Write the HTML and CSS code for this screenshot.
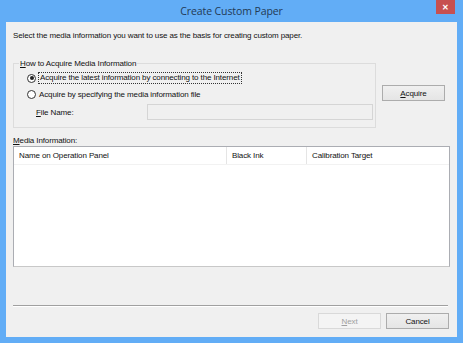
FILE: index.html
```html
<!DOCTYPE html>
<html lang="en">
	<head>
		<title>Create Custom Paper</title>
		<link rel="stylesheet" href="styles.css">
	</head>
	<body>
		<div class="window">
			<div class="titlebar">
				<span class="title">Create Custom Paper</span>
				<span class="close">&#x2715;</span>
			</div>
			<div class="client">
				<p class="intro">Select the media information you want to use as the basis for creating custom paper.</p>

				<div class="acquire-row">
					<div class="group">
						<span class="legend"><u>H</u>ow to Acquire Media Information</span>
						<label class="radio">
							<span class="dot checked"></span>
							<span class="focus">Acquire the latest information by connecting to the Internet</span>
						</label>
						<label class="radio">
							<span class="dot"></span>
							<span>Acquire by specifying the media information file</span>
						</label>
						<div class="file-row">
							<span class="file-label"><u>F</u>ile Name:</span>
							<span class="input"></span>
						</div>
					</div>
					<button class="btn btn-acquire"><u>A</u>cquire</button>
				</div>

				<p class="list-label"><u>M</u>edia Information:</p>
				<div class="list">
					<div class="list-head">
						<span class="col col-name">Name on Operation Panel</span>
						<span class="col col-ink">Black Ink</span>
						<span class="col col-target">Calibration Target</span>
					</div>
				</div>

				<div class="separator"></div>

				<div class="buttons">
					<button class="btn" disabled><u>N</u>ext</button>
					<button class="btn">Cancel</button>
				</div>
			</div>
		</div>
	</body>
</html>
```

FILE: styles.css
```css
*, *:after, *:before { box-sizing: border-box; }

html, body {
	margin: 0;
	padding: 0;
}

body {
	width: 463px;
	height: 343px;
	overflow: hidden;
	font-family: 'Liberation Sans', Arial, sans-serif;
	font-size: 8px;
	letter-spacing: -0.12px;
	color: #111;
}

u { text-decoration: underline; }

/*************************************
Window frame
**************************************/

.window {
	width: 463px;
	height: 343px;
	background: #62adf6;
	padding: 0 6px 6px 6px;
	display: flex;
	flex-direction: column;
}

.titlebar {
	position: relative;
	height: 22px;
	display: flex;
	align-items: center;
	justify-content: center;
}

.title {
	font-family: 'Open Sans', sans-serif;
	font-size: 10.5px;
	letter-spacing: -0.1px;
	color: #233a55;
}

.close {
	position: absolute;
	top: 0;
	right: 2px;
	width: 19px;
	height: 14px;
	background: #c75050;
	color: #fff;
	font-size: 8px;
	font-weight: bold;
	display: flex;
	align-items: center;
	justify-content: center;
}

.client {
	flex: 1;
	background: #f0f0f0;
	padding: 0 7px;
	display: flex;
	flex-direction: column;
}

.intro {
	margin: 8px 0 0;
	height: 11px;
	line-height: 11px;
}

/*************************************
Acquire group
**************************************/

.acquire-row {
	display: flex;
	align-items: flex-start;
	margin-top: 22px;
}

.group {
	width: 363px;
	height: 65px;
	padding-top: 6px;
	border: 1px solid #dcdcdc;
	position: relative;
}

.group .legend {
	position: absolute;
	top: -6px;
	left: 5px;
	padding: 0 1px;
	background: #f0f0f0;
	line-height: 11px;
}

.radio {
	display: flex;
	align-items: center;
	height: 16px;
	padding-left: 13px;
}

.dot {
	width: 9px;
	height: 9px;
	border: 1px solid #333;
	border-radius: 50%;
	background: #fff;
	margin-right: 3px;
	position: relative;
}

.dot.checked::after {
	content: '';
	position: absolute;
	left: 1.5px;
	top: 1.5px;
	width: 4px;
	height: 4px;
	border-radius: 50%;
	background: #222;
}

.focus {
	outline: 1px dotted #333;
	padding: 0 1px;
	line-height: 10px;
}

.file-row {
	display: flex;
	align-items: center;
	margin-top: 2px;
	padding-left: 22px;
}

.file-label {
	width: 111px;
}

.input {
	width: 226px;
	height: 16px;
	border: 1px solid #d5d5d5;
	background: #f0f0f0;
}

.btn {
	height: 16px;
	width: 63px;
	padding: 0;
	font-family: inherit;
	font-size: 8px;
	letter-spacing: -0.12px;
	color: #111;
	border: 1px solid #acacac;
	background: linear-gradient(#f0f0f0, #e5e5e5);
}

.btn:disabled {
	color: #a0a0a0;
	border-color: #d9d9d9;
	background: #f4f4f4;
}

.btn-acquire {
	margin: 22px 0 0 6px;
}

/*************************************
Media list
**************************************/

.list-label {
	margin: 7px 0 0;
	line-height: 11px;
}

.list {
	height: 121px;
	margin-top: 0;
	background: #fff;
	border: 1px solid #abadb3;
	border-bottom-color: #c8c8c8;
}

.list-head {
	display: flex;
	height: 18px;
	border-bottom: 1px solid #f2f2f2;
}

.col {
	display: flex;
	align-items: center;
	padding-left: 5px;
	border-right: 1px solid #e5e5e5;
}

.col-name { width: 213px; }
.col-ink { width: 80px; }
.col-target { width: 142px; border-right: 0; }

/*************************************
Footer
**************************************/

.separator {
	margin: 38px 2px 0 0;
	height: 2px;
	border-top: 1px solid #a0a0a0;
	border-bottom: 1px solid #fff;
}

.buttons {
	display: flex;
	justify-content: flex-end;
	gap: 5px;
	margin-top: 6px;
	padding-right: 1px;
}
```
